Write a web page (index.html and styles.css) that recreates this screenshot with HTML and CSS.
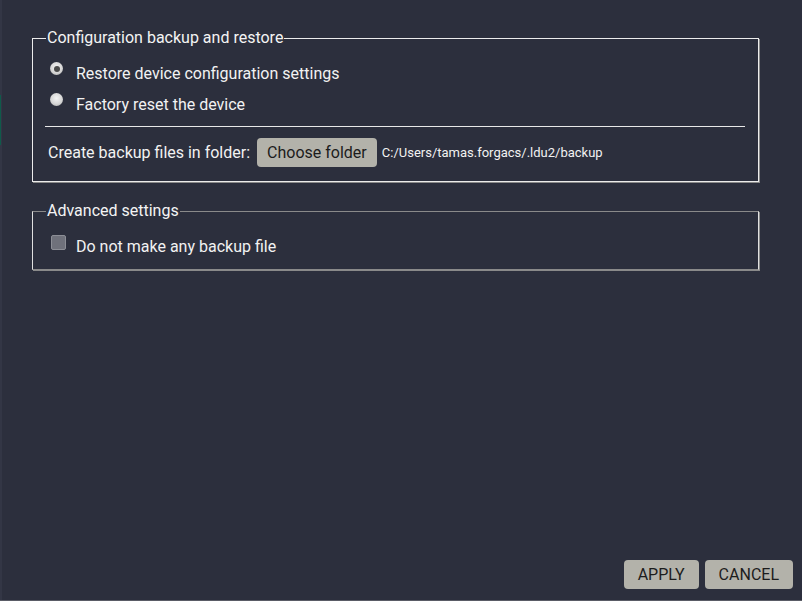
FILE: index.html
```html
<!DOCTYPE html>
<html>
<head>
<meta charset="utf-8">
<link rel="stylesheet" href="styles.css">
</head>
<body>
<div class="window">
  <div class="edge"><div class="edge-green"></div></div>
  <div class="main">
    <fieldset class="group group-primary">
      <legend class="group-title">Configuration backup and restore</legend>
      <div class="option">
        <span class="radio radio-checked"></span>
        <span class="label">Restore device configuration settings</span>
      </div>
      <div class="option">
        <span class="radio"></span>
        <span class="label">Factory reset the device</span>
      </div>
      <div class="separator"></div>
      <div class="folder-row">
        <span class="label">Create backup files in folder:</span>
        <button class="btn btn-folder">Choose folder</button>
        <span class="path">C:/Users/tamas.forgacs/.ldu2/backup</span>
      </div>
    </fieldset>
    <fieldset class="group group-advanced">
      <legend class="group-title">Advanced settings</legend>
      <div class="option">
        <span class="checkbox"></span>
        <span class="label">Do not make any backup file</span>
      </div>
    </fieldset>
    <div class="spacer"></div>
    <div class="actions">
      <button class="btn btn-action">APPLY</button>
      <button class="btn btn-action">CANCEL</button>
    </div>
  </div>
</div>
</body>
</html>
```

FILE: styles.css
```css
html, body {
  margin: 0;
  padding: 0;
  background: #2c2f3d;
}
body {
  width: 802px;
  height: 601px;
  overflow: hidden;
  font-family: Roboto, "Liberation Sans", sans-serif;
  color: #f2f2f2;
}
.window {
  display: flex;
  width: 802px;
  height: 600px;
  border-bottom: 1px solid #5a5c66;
  background: #2c2f3d;
}
.edge {
  width: 2px;
  background: #333645;
  display: flex;
  flex-direction: column;
}
.edge-green {
  margin-top: 95px;
  height: 50px;
  width: 1px;
  background: #0f5a4a;
}
.main {
  flex: 1;
  display: flex;
  flex-direction: column;
  padding: 29px 9px 11px 30px;
}
.group {
  margin: 0;
  width: 727px;
  box-sizing: border-box;
  min-width: 0;
}
.group-primary {
  border: 1px solid #ececec;
  box-shadow: 1px 1px 0 #8a8a8a;
  padding: 11px 13px 14px 12px;
}
.group-advanced {
  margin-top: 20px;
  border: 1px solid #e0e0e0;
  border-top-color: #8a8a8a;
  border-bottom-color: #8a8a8a;
  box-shadow: 1px 1px 0 #8a8a8a;
  padding: 11px 13px 7px 12px;
}
.group-title {
  font-size: 16px;
  line-height: 18px;
  padding: 0 1px;
  margin-left: 1px;
  color: #f4f4f4;
}
.option {
  display: flex;
  align-items: center;
  height: 31px;
  padding-left: 5px;
}
.label {
  font-size: 16px;
  color: #f2f2f2;
}
.radio {
  width: 13px;
  height: 13px;
  border-radius: 50%;
  background: radial-gradient(circle at 50% 40%, #f4f4f4 0%, #d6d6d6 55%, #a8a8a8 100%);
  margin-right: 13px;
  position: relative;
  flex: none;
  transform: translateY(-5px);
}
.radio-checked::after {
  content: "";
  position: absolute;
  left: 3.5px;
  top: 3.5px;
  width: 6px;
  height: 6px;
  border-radius: 50%;
  background: #4a4a4a;
}
.checkbox {
  width: 13px;
  height: 13px;
  background: #6f717b;
  border: 1px solid #8c8e96;
  border-radius: 2px;
  margin-left: 1px;
  margin-right: 10px;
  flex: none;
  transform: translateY(-4px);
}
.separator {
  height: 1px;
  background: #e8e8e8;
  margin: 6px 0 11px;
}
.folder-row {
  display: flex;
  align-items: center;
  padding-left: 3px;
}
.btn {
  font-family: Roboto, "Liberation Sans", sans-serif;
  border: none;
  background: #b3b2aa;
  color: #1c1c1c;
  border-radius: 4px;
  cursor: pointer;
}
.btn-folder {
  font-size: 16px;
  height: 29px;
  padding: 0 10px;
  margin-left: 7px;
  margin-right: 5px;
}
.path {
  font-size: 13px;
  color: #f2f2f2;
}
.spacer {
  flex: 1;
}
.actions {
  display: flex;
  justify-content: flex-end;
  gap: 6px;
}
.btn-action {
  font-size: 16px;
  height: 29px;
  padding: 0 14px;
}
```
